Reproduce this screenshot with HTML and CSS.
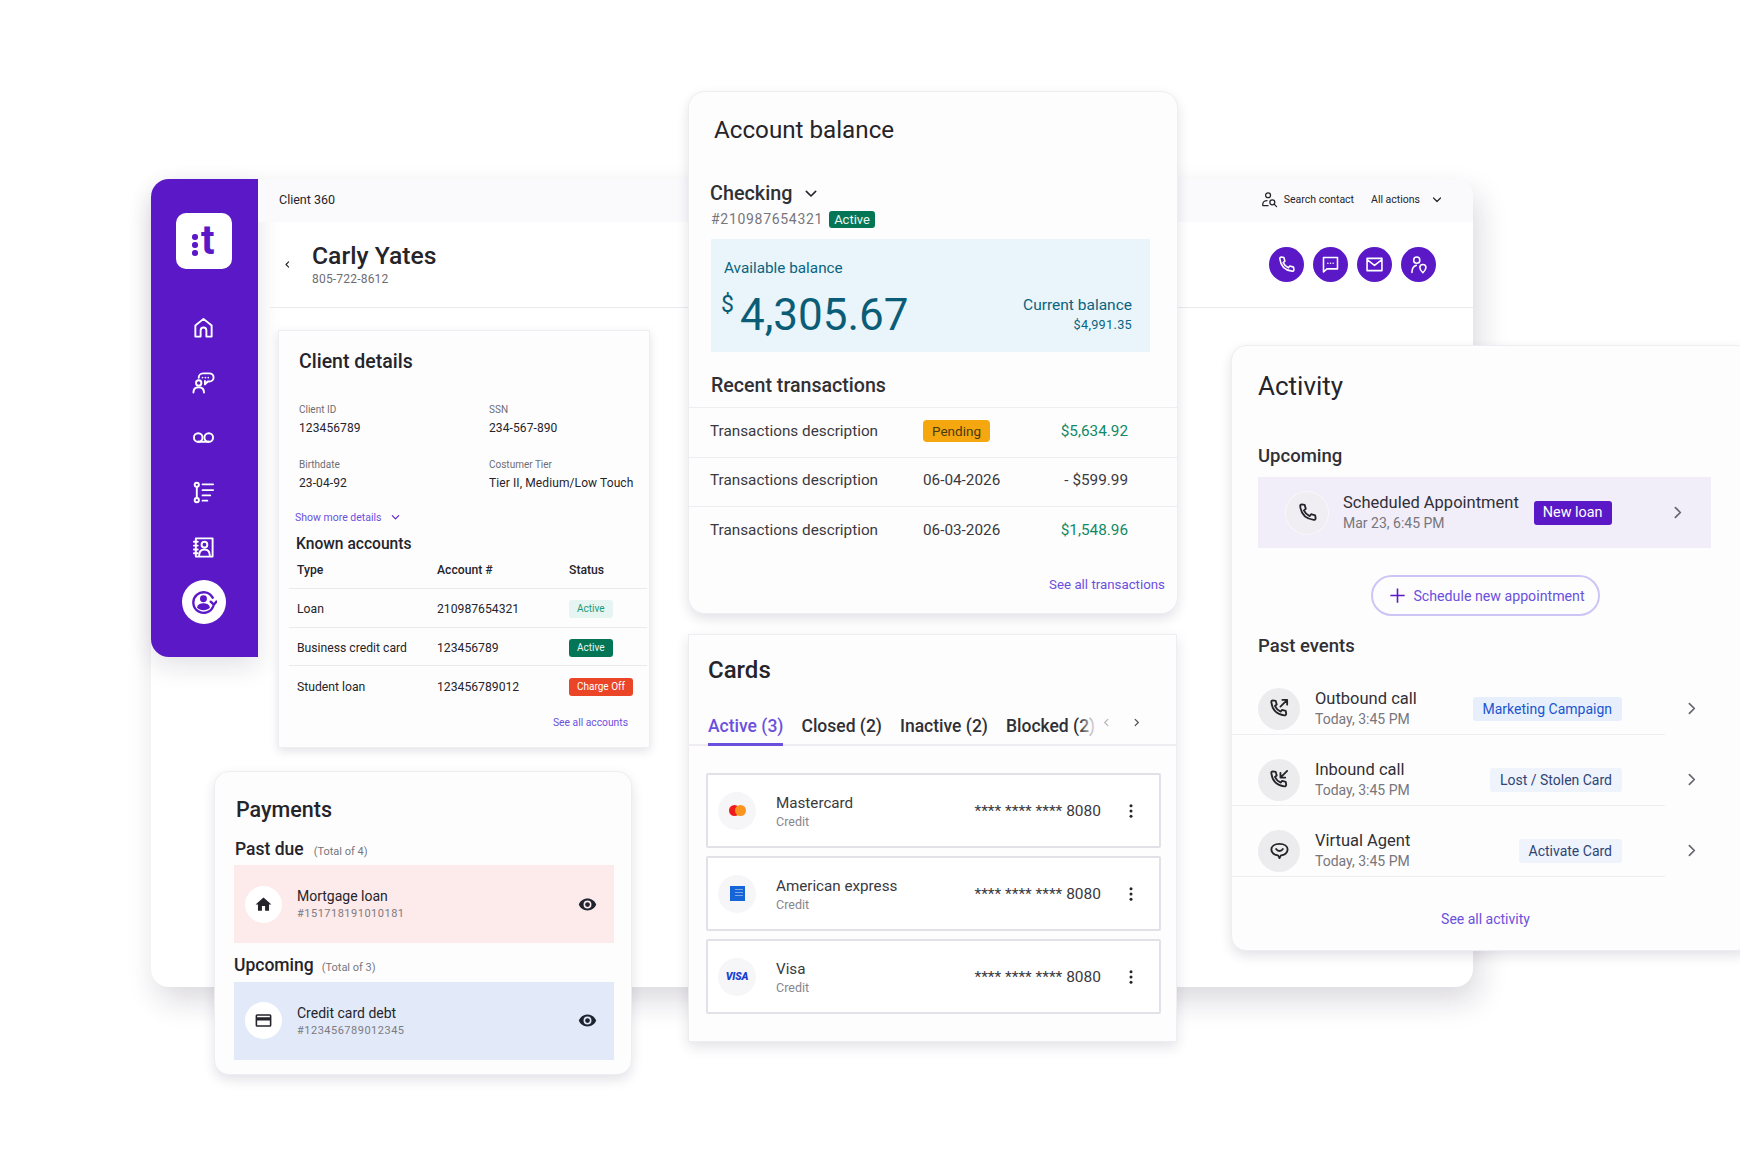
FILE: index.html
```html
<!DOCTYPE html>
<html lang="en">
<head>
    <meta charset="UTF-8">
    <meta name="viewport" content="width=device-width, initial-scale=1.0">
    <title>Client 360</title>
    <link rel="stylesheet" href="styles.css">
</head>
<body>

<!-- Shared icons -->
<svg class="icon-defs" xmlns="http://www.w3.org/2000/svg">
    <symbol id="i-phone" viewBox="0 0 24 24"><path d="M6 3.500 9 4l1.200 4.200-2 1.600a12 12 0 0 0 6 6l1.600-2 4.200 1.200.5 3c0 1-.9 1.800-2 1.600C10.500 18.700 5.300 13.500 4.400 5.500 4.200 4.400 5 3.500 6 3.500z"/></symbol>
    <symbol id="i-out" viewBox="0 0 24 24"><path d="M5 3.500 8 4l1.100 3.800-1.900 1.500a12 12 0 0 0 6 6l1.500-1.900 3.800 1.100.5 3c0 1-.9 1.800-2 1.600C9 18 4.500 13.500 3.500 5.500 3.300 4.400 4 3.500 5 3.500z"/><path d="M13 10l7-7M15 3h5v5"/></symbol>
    <symbol id="i-in" viewBox="0 0 24 24"><path d="M5 3.500 8 4l1.100 3.800-1.900 1.500a12 12 0 0 0 6 6l1.500-1.900 3.800 1.100.5 3c0 1-.9 1.800-2 1.600C9 18 4.500 13.500 3.500 5.500 3.300 4.400 4 3.500 5 3.500z"/><path d="M20 3l-7 7M13 5v5h5"/></symbol>
    <symbol id="i-right" viewBox="0 0 24 24"><path d="M9 5l7 7-7 7"/></symbol>
    <symbol id="i-left" viewBox="0 0 24 24"><path d="M15 5l-7 7 7 7"/></symbol>
    <symbol id="i-down" viewBox="0 0 24 24"><path d="M5 8l7 7 7-7"/></symbol>
    <symbol id="i-eye" viewBox="0 0 24 24"><path fill-rule="evenodd" d="M12 4.500C7 4.500 2.700 7.600 1 12c1.700 4.400 6 7.500 11 7.500s9.300-3.100 11-7.500c-1.700-4.400-6-7.500-11-7.500zM12 17a5 5 0 1 1 0-10 5 5 0 0 1 0 10z"/><circle cx="12" cy="12" r="3"/></symbol>
    <symbol id="i-more" viewBox="0 0 24 24"><circle cx="12" cy="5" r="2"/><circle cx="12" cy="12" r="2"/><circle cx="12" cy="19" r="2"/></symbol>
</svg>

<div class="stage">

    <!-- Client 360 window -->
    <section class="window">
        <aside class="rail">
            <div class="logo">
                <span class="logo-dots"><i></i><i></i><i></i></span>
                <span class="logo-t">t</span>
            </div>
            <nav class="rail-nav">
                <svg class="rail-icon" viewBox="0 0 24 24"><path d="M3.500 21.500V10L12 3l8.500 7v11.500H15V15a3 3 0 0 0-6 0v6.500z"/></svg>
                <svg class="rail-icon" viewBox="0 0 24 24"><circle cx="7" cy="12.500" r="2.800"/><path d="M1.500 22.500c0-3.500 2-5.500 5.500-5.500s5.500 2 5.500 5.500M7 7c0-2.500 2-4.500 4.500-4.500H18c2.500 0 4.500 1.800 4.500 4.200S20.500 11 18 11h-1.500l-3 3v-3.500"/><path class="dots" d="M11 6.800h.01M14 6.800h.01M17 6.800h.01"/></svg>
                <svg class="rail-icon" viewBox="0 0 24 24"><circle cx="6.500" cy="12" r="4.500"/><circle cx="17.500" cy="12" r="4.500"/><path d="M6.500 16.500h11"/></svg>
                <svg class="rail-icon" viewBox="0 0 24 24"><circle cx="5" cy="4" r="2.200"/><circle cx="5" cy="20" r="2.200"/><path d="M5 6v12M11 3.500h11M11 9.500h11M11 15h8M11 20.500h5"/></svg>
                <svg class="rail-icon" viewBox="0 0 24 24"><path d="M4 2.500h17.500v19H4zM2 6h4M2 10h4M2 14h4M2 18h4"/><circle cx="13" cy="9" r="3"/><path d="M7.500 20c0-4 2-6 5.500-6s5.500 2 5.500 6"/></svg>
                <div class="rail-active">
                    <svg viewBox="0 0 24 24"><path class="ring" d="M20 8A9.500 9.500 0 1 0 20.500 16"/><circle cx="11.500" cy="9" r="3.200" class="solid"/><path class="solid" d="M5.500 17c.5-2.500 3-3.800 6-3.800s5.500 1.300 6 3.800c-1.500 1.600-3.600 2.500-6 2.500s-4.500-.9-6-2.500z"/><path class="ring" d="M23.500 11.500l-2.500 3-2.800-2.800"/></svg>
                </div>
            </nav>
        </aside>

        <div class="window-main">
            <header class="topbar">
                <span class="topbar-title">Client 360</span>
                <div class="topbar-actions">
                    <span class="topbar-link">
                        <svg class="icon-sm" viewBox="0 0 24 24"><circle cx="10" cy="6" r="3.500"/><path d="M2.500 20.500v-2c0-3 3-5 6-5M2.500 20.500H10"/><circle cx="16" cy="16" r="3.500"/><path d="M18.500 18.500l3.500 3.500"/></svg>
                        Search contact
                    </span>
                    <span class="topbar-link">All actions</span>
                    <svg class="chev chev-sm"><use href="#i-down"/></svg>
                </div>
            </header>

            <div class="profile">
                <svg class="chev chev-back"><use href="#i-left"/></svg>
                <div class="profile-name">
                    <h1>Carly Yates</h1>
                    <p>805-722-8612</p>
                </div>
                <div class="quick-actions">
                    <span class="quick-btn"><svg viewBox="0 0 24 24"><use href="#i-phone"/></svg></span>
                    <span class="quick-btn"><svg viewBox="0 0 24 24"><path d="M4 4h16v13H8l-4 3.500z"/><path d="M9 10.500h.01M12 10.500h.01M15 10.500h.01"/></svg></span>
                    <span class="quick-btn"><svg viewBox="0 0 24 24"><path d="M3.500 5h17v14h-17zM3.500 6.500L12 13l8.500-6.500"/></svg></span>
                    <span class="quick-btn"><svg viewBox="0 0 24 24"><circle cx="10" cy="7" r="3.500"/><path d="M4.500 21c0-4 1.500-7 5-8"/><path d="M17 21.500s-3.500-3.500-3.500-6a3.500 3.500 0 0 1 7 0c0 2.500-3.500 6-3.500 6z"/></svg></span>
                </div>
            </div>

            <div class="client-card">
                <h2 class="client-title">Client details</h2>
                <dl class="detail-grid">
                    <div><dt>Client ID</dt><dd>123456789</dd></div>
                    <div><dt>SSN</dt><dd>234-567-890</dd></div>
                    <div><dt>Birthdate</dt><dd>23-04-92</dd></div>
                    <div><dt>Costumer Tier</dt><dd>Tier II, Medium/Low Touch</dd></div>
                </dl>
                <div class="show-more">Show more details <svg class="chev chev-purple"><use href="#i-down"/></svg></div>
                <h3 class="known-title">Known accounts</h3>
                <div class="acct-table">
                    <div class="acct-row acct-head"><span>Type</span><span>Account #</span><span>Status</span></div>
                    <div class="acct-row"><span>Loan</span><span>210987654321</span><span><b class="pill pill-soft">Active</b></span></div>
                    <div class="acct-row"><span>Business credit card</span><span>123456789</span><span><b class="pill pill-green">Active</b></span></div>
                    <div class="acct-row"><span>Student loan</span><span>123456789012</span><span><b class="pill pill-red">Charge Off</b></span></div>
                </div>
                <a class="link see-accounts">See all accounts</a>
            </div>
        </div>
    </section>

    <!-- Payments -->
    <section class="card payments">
        <h2>Payments</h2>
        <div class="pay-head pay-head-first"><h3>Past due</h3><small>(Total of 4)</small></div>
        <div class="pay-item pay-red">
            <span class="pay-icon"><svg viewBox="0 0 24 24"><path d="M10 20v-6h4v6h5v-8h3L12 3 2 12h3v8z"/></svg></span>
            <div class="pay-text"><strong>Mortgage loan</strong><em>#151718191010181</em></div>
            <svg class="eye"><use href="#i-eye"/></svg>
        </div>
        <div class="pay-head"><h3>Upcoming</h3><small>(Total of 3)</small></div>
        <div class="pay-item pay-blue">
            <span class="pay-icon"><svg viewBox="0 0 24 24"><path fill-rule="evenodd" d="M20 4H4a2 2 0 0 0-2 2v12a2 2 0 0 0 2 2h16a2 2 0 0 0 2-2V6a2 2 0 0 0-2-2zm0 14H4v-6h16zm0-10H4V6h16z"/></svg></span>
            <div class="pay-text"><strong>Credit card debt</strong><em>#123456789012345</em></div>
            <svg class="eye"><use href="#i-eye"/></svg>
        </div>
    </section>

    <!-- Account balance -->
    <section class="card balance">
        <h2 class="balance-title">Account balance</h2>
        <div class="checking">Checking <svg class="chev chev-md"><use href="#i-down"/></svg></div>
        <div class="acct-no">#210987654321 <b class="pill pill-green pill-lg">Active</b></div>
        <div class="balance-box">
            <div class="avail">Available balance</div>
            <div class="balance-row">
                <div class="amount"><sup>$</sup>4,305.67</div>
                <div class="current"><span>Current balance</span><small>$4,991.35</small></div>
            </div>
        </div>
        <h3 class="recent-title">Recent transactions</h3>
        <div class="tx-list">
            <div class="tx-row"><span>Transactions description</span><span><b class="pill-pending">Pending</b></span><span class="tx-amt tx-plus">$5,634.92</span></div>
            <div class="tx-row"><span>Transactions description</span><span>06-04-2026</span><span class="tx-amt">- $599.99</span></div>
            <div class="tx-row"><span>Transactions description</span><span>06-03-2026</span><span class="tx-amt tx-plus">$1,548.96</span></div>
        </div>
        <a class="link see-tx">See all transactions</a>
    </section>

    <!-- Cards -->
    <section class="card cards">
        <h2 class="cards-title">Cards</h2>
        <div class="tabs">
            <div class="tab-strip">
                <span class="tab tab-on">Active (3)</span>
                <span class="tab">Closed (2)</span>
                <span class="tab">Inactive (2)</span>
                <span class="tab">Blocked (2)</span>
            </div>
            <svg class="chev tab-chev tab-chev-off"><use href="#i-left"/></svg>
            <svg class="chev tab-chev"><use href="#i-right"/></svg>
        </div>
        <div class="card-list">
            <div class="card-row">
                <span class="brand"><i class="mc mc-red"></i><i class="mc mc-orange"></i></span>
                <div class="card-name"><strong>Mastercard</strong><em>Credit</em></div>
                <div class="card-no"><span>**** **** ****</span> 8080</div>
                <svg class="more"><use href="#i-more"/></svg>
            </div>
            <div class="card-row">
                <span class="brand"><i class="amex"></i></span>
                <div class="card-name"><strong>American express</strong><em>Credit</em></div>
                <div class="card-no"><span>**** **** ****</span> 8080</div>
                <svg class="more"><use href="#i-more"/></svg>
            </div>
            <div class="card-row">
                <span class="brand"><span class="visa">VISA</span></span>
                <div class="card-name"><strong>Visa</strong><em>Credit</em></div>
                <div class="card-no"><span>**** **** ****</span> 8080</div>
                <svg class="more"><use href="#i-more"/></svg>
            </div>
        </div>
    </section>

    <!-- Activity -->
    <section class="card activity">
        <h2 class="activity-title">Activity</h2>
        <h3 class="activity-sub">Upcoming</h3>
        <div class="appt">
            <span class="round round-light"><svg viewBox="0 0 24 24"><use href="#i-phone"/></svg></span>
            <div class="event-text"><strong>Scheduled Appointment</strong><em>Mar 23, 6:45 PM</em></div>
            <b class="pill-new">New loan</b>
            <svg class="chev appt-chev"><use href="#i-right"/></svg>
        </div>
        <div class="schedule-wrap">
            <a class="schedule-btn"><svg viewBox="0 0 24 24"><path d="M12 3v18M3 12h18"/></svg>Schedule new appointment</a>
        </div>
        <h3 class="activity-sub past-title">Past events</h3>
        <div class="event">
            <span class="round"><svg viewBox="0 0 24 24"><use href="#i-out"/></svg></span>
            <div class="event-text"><strong>Outbound call</strong><em>Today, 3:45 PM</em></div>
            <span class="tag tag-blue">Marketing Campaign</span>
            <svg class="chev event-chev"><use href="#i-right"/></svg>
        </div>
        <div class="event">
            <span class="round"><svg viewBox="0 0 24 24"><use href="#i-in"/></svg></span>
            <div class="event-text"><strong>Inbound call</strong><em>Today, 3:45 PM</em></div>
            <span class="tag tag-lost">Lost / Stolen Card</span>
            <svg class="chev event-chev"><use href="#i-right"/></svg>
        </div>
        <div class="event">
            <span class="round"><svg viewBox="0 0 24 24"><path d="M12 5c-5 0-8.500 2.500-8.500 6s3.500 6 7 6l1.500 3 1.500-3c3.500 0 7-2.500 7-6s-3.500-6-8.500-6z"/><path d="M8.500 10.500c1 1.500 2 2 3.500 2s2.500-.5 3.500-2"/></svg></span>
            <div class="event-text"><strong>Virtual Agent</strong><em>Today, 3:45 PM</em></div>
            <span class="tag tag-lost">Activate Card</span>
            <svg class="chev event-chev"><use href="#i-right"/></svg>
        </div>
        <a class="link see-activity">See all activity</a>
    </section>

</div>

</body>
</html>
```

FILE: styles.css
```css
* {
    box-sizing: border-box;
}

body {
    margin: 0;
    background-color: #fff;
    font-family: Roboto, "Liberation Sans", sans-serif;
    color: #25242a;
}

h1, h2, h3, p, dl, dd {
    margin: 0;
}

em {
    font-style: normal;
}

.icon-defs {
    display: none;
}

/* The windows sit on a free canvas */
.stage {
    position: relative;
    width: 1740px;
    height: 1160px;
    overflow: hidden;
}

.card {
    position: absolute;
    background-color: #fefdfe;
    border: 1px solid #efedf2;
    box-shadow: 0 5px 12px rgba(40, 30, 70, 0.13);
}

.link {
    color: #6a50dd;
    font-weight: 500;
}

.chev {
    fill: none;
    stroke: #25242a;
    stroke-width: 2.4;
    stroke-linecap: round;
    stroke-linejoin: round;
}

/* Main window */
.window {
    position: absolute;
    left: 151px;
    top: 179px;
    width: 1322px;
    height: 808px;
    display: flex;
    background-color: #fff;
    border-radius: 18px;
    box-shadow: 6px 14px 30px rgba(30, 20, 50, 0.16);
}

.rail {
    flex: 0 0 107px;
    height: 478px;
    padding: 34px 2px 0 0;
    background-color: #5a18c7;
    border-radius: 18px 0 0 18px;
    display: flex;
    flex-direction: column;
    align-items: center;
    box-shadow: 0 10px 24px rgba(30, 20, 50, 0.12);
}

.logo {
    width: 56px;
    height: 56px;
    background-color: #fff;
    border-radius: 10px;
    display: flex;
    justify-content: center;
    align-items: center;
    gap: 3px;
    color: #5a18c7;
}

.logo-dots {
    display: flex;
    flex-direction: column;
    gap: 2.500px;
    margin-top: 8px;
}

.logo-dots i {
    width: 5.500px;
    height: 5.500px;
    border-radius: 50%;
    background-color: #5a18c7;
}

.logo-t {
    font-size: 40px;
    font-weight: 700;
    line-height: 40px;
}

.rail-nav {
    margin-top: 47px;
    display: flex;
    flex-direction: column;
    align-items: center;
    gap: 32px;
}

.rail-icon {
    width: 23px;
    height: 23px;
    fill: none;
    stroke: #fff;
    stroke-width: 2;
    stroke-linejoin: round;
    stroke-linecap: round;
}

.rail-icon .dots {
    stroke-width: 1.800;
}

.rail-active {
    width: 44px;
    height: 44px;
    margin-top: -11px;
    background-color: #fff;
    border-radius: 50%;
    display: flex;
    justify-content: center;
    align-items: center;
}

.rail-active svg {
    width: 26px;
    height: 26px;
}

.rail-active .ring {
    fill: none;
    stroke: #5a18c7;
    stroke-width: 2.200;
    stroke-linecap: round;
    stroke-linejoin: round;
}

.rail-active .solid {
    fill: #5a18c7;
}

.window-main {
    flex: 1;
    min-width: 0;
}

.topbar {
    height: 43px;
    padding: 0 30px 2px 21px;
    background-color: #faf9fc;
    border-radius: 0 18px 0 0;
    display: flex;
    justify-content: space-between;
    align-items: center;
}

.topbar-title {
    font-size: 12.500px;
}

.topbar-actions {
    display: flex;
    align-items: center;
    gap: 17px;
}

.topbar-link {
    display: flex;
    align-items: center;
    gap: 6px;
    font-size: 10.500px;
}

.icon-sm {
    width: 17px;
    height: 17px;
    fill: none;
    stroke: #25242a;
    stroke-width: 1.800;
    stroke-linecap: round;
}

.chev-sm {
    width: 12px;
    height: 12px;
    margin-left: -6px;
}

.profile {
    height: 86px;
    margin-left: 12px;
    padding-right: 37px;
    border-bottom: 1px solid #ebe9ee;
    display: flex;
    align-items: center;
}

.chev-back {
    width: 9px;
    height: 9px;
    margin: 0 20px 0 13px;
    stroke-width: 3;
}

.profile-name {
    flex: 1;
}

.profile-name h1 {
    font-size: 24.700px;
    font-weight: 500;
    line-height: 32px;
    margin-top: -4px;
}

.profile-name p {
    font-size: 12px;
    color: #6e6d73;
    letter-spacing: 0.2px;
}

.quick-actions {
    display: flex;
    gap: 9px;
}

.quick-btn {
    width: 35px;
    height: 35px;
    border-radius: 50%;
    background-color: #5a18c7;
    display: flex;
    justify-content: center;
    align-items: center;
}

.quick-btn svg {
    width: 21px;
    height: 21px;
    fill: none;
    stroke: #fff;
    stroke-width: 1.800;
    stroke-linecap: round;
    stroke-linejoin: round;
}

/* Client details */
.client-card {
    width: 372px;
    height: 418px;
    margin: 22px 0 0 20px;
    padding: 17px 0 0;
    position: relative;
    background-color: #fefdfe;
    border: 1px solid #efedf2;
    box-shadow: 0 3px 9px rgba(40, 30, 70, 0.13);
}

.client-title {
    font-size: 19.500px;
    font-weight: 500;
    margin-left: 20px;
    line-height: 28px;
}

.detail-grid {
    margin: 27px 0 0 20px;
    display: grid;
    grid-template-columns: 190px 1fr;
    row-gap: 22px;
}

.detail-grid dt {
    font-size: 10px;
    color: #6e6d73;
    line-height: 14px;
}

.detail-grid dd {
    margin-top: 3px;
    font-size: 12px;
    letter-spacing: 0.1px;
    line-height: 16px;
}

.show-more {
    margin: 20px 0 0 16px;
    display: flex;
    align-items: center;
    gap: 8px;
    font-size: 10.500px;
    color: #6a50dd;
}

.chev-purple {
    width: 11px;
    height: 11px;
    stroke: #5a18c7;
}

.known-title {
    margin: 10px 0 0 17px;
    font-size: 15.600px;
    font-weight: 500;
    line-height: 20px;
}

.acct-table {
    margin: -2px 2px 0 10px;
}

.acct-row {
    display: grid;
    grid-template-columns: 140px 132px 1fr;
    align-items: center;
    height: 38.500px;
    padding: 3px 0 0 8px;
    font-size: 12.200px;
    border-bottom: 1px solid #ebe9ee;
}

.acct-row:last-child {
    border-bottom: 0;
}

.acct-head {
    height: 37px;
    padding-top: 0;
    font-weight: 500;
}

.pill {
    display: inline-block;
    height: 18px;
    padding: 0 8px;
    border-radius: 3px;
    font-size: 10px;
    font-weight: 400;
    line-height: 18px;
}

.pill-soft {
    background-color: #e6f5f1;
    color: #1c9a75;
}

.pill-green {
    background-color: #047555;
    color: #e9f7f2;
}

.pill-red {
    background-color: #ea4526;
    color: #fff;
}

.see-accounts {
    position: absolute;
    right: 21px;
    bottom: 18px;
    font-size: 10.300px;
    font-weight: 400;
}

/* Payments */
.payments {
    left: 214px;
    top: 771px;
    width: 418px;
    height: 304px;
    padding: 23px 0 0 21px;
    border-radius: 15px;
}

.payments h2 {
    font-size: 21.500px;
    font-weight: 500;
    line-height: 30px;
}

.pay-head {
    display: flex;
    align-items: baseline;
    gap: 8px;
    height: 38.500px;
    margin-left: -2px;
    padding-top: 10px;
}

.pay-head-first {
    margin-left: -1px;
    margin-top: 12px;
    height: 28px;
    padding-top: 0;
    gap: 10px;
}

.pay-head h3 {
    font-size: 17.500px;
    font-weight: 500;
    line-height: 24px;
}

.pay-head small {
    font-size: 11px;
    color: #77767c;
}

.pay-item {
    width: 380px;
    height: 78px;
    margin-left: -2px;
    padding: 0 17px 0 11px;
    display: flex;
    align-items: center;
}

.pay-red {
    background-color: #fdeaea;
}

.pay-blue {
    background-color: #e2eafa;
}

.pay-icon {
    width: 37px;
    height: 37px;
    border-radius: 50%;
    background-color: #fff;
    display: flex;
    justify-content: center;
    align-items: center;
}

.pay-icon svg {
    width: 19px;
    height: 19px;
    fill: #25242a;
}

.pay-text {
    flex: 1;
    margin-left: 15px;
    display: flex;
    flex-direction: column;
    gap: 1px;
}

.pay-text strong {
    font-size: 14px;
    font-weight: 400;
    line-height: 19px;
}

.pay-text em {
    font-size: 11px;
    color: #7d7a80;
    letter-spacing: 0.5px;
    line-height: 14px;
}

.eye {
    width: 19px;
    height: 19px;
    fill: #1f2530;
}

/* Account balance */
.balance {
    left: 688px;
    top: 91px;
    width: 490px;
    height: 523px;
    border-radius: 17px;
}

.balance-title {
    margin: 21px 0 0 25px;
    font-size: 24.200px;
    font-weight: 400;
    line-height: 34px;
}

.checking {
    margin: 34px 0 0 21px;
    display: flex;
    align-items: center;
    gap: 11px;
    font-size: 19.800px;
    font-weight: 500;
    line-height: 26px;
    color: #303035;
}

.chev-md {
    width: 16px;
    height: 16px;
}

.acct-no {
    margin: 1px 0 0 22px;
    display: flex;
    align-items: center;
    gap: 6px;
    font-size: 14px;
    color: #77767c;
    letter-spacing: 0.7px;
    line-height: 22px;
}

.pill-lg {
    height: 17px;
    padding: 0 5px;
    font-size: 13px;
    line-height: 17px;
    letter-spacing: 0;
}

.balance-box {
    width: 439px;
    height: 113px;
    margin: 9px 0 0 22px;
    padding: 20px 18px 0 13px;
    background-color: #e9f5fa;
    color: #0a6480;
}

.avail {
    font-size: 15.300px;
    line-height: 18px;
}

.balance-row {
    display: flex;
    justify-content: space-between;
    margin-top: 8px;
}

.amount {
    font-size: 44px;
    line-height: 60px;
    color: #0b5d77;
}

.amount sup {
    font-size: 23px;
    line-height: 0;
    vertical-align: 18px;
    margin-right: 6px;
    margin-left: -3px;
}

.current {
    display: flex;
    flex-direction: column;
    align-items: flex-end;
    margin-top: 10px;
}

.current span {
    font-size: 15.500px;
    line-height: 20px;
}

.current small {
    font-size: 12.700px;
    letter-spacing: 0.3px;
    line-height: 20px;
}

.recent-title {
    margin: 23px 0 0 22px;
    font-size: 19.600px;
    font-weight: 500;
    line-height: 22px;
    color: #303035;
}

.tx-list {
    margin-top: 10px;
    border-top: 1px solid #efedf2;
}

.tx-row {
    display: grid;
    grid-template-columns: 213px 123px 1fr;
    align-items: center;
    height: 49.500px;
    padding: 0 49px 3px 21px;
    font-size: 15.300px;
    color: #3a393e;
    border-bottom: 1px solid #efedf2;
}

.tx-row:last-child {
    border-bottom: 0;
}

.pill-pending {
    display: inline-block;
    height: 22px;
    padding: 0 9px;
    border-radius: 4px;
    background-color: #f5a70f;
    font-size: 13.500px;
    font-weight: 400;
    line-height: 22px;
    color: #4a3a10;
}

.tx-amt {
    text-align: right;
}

.tx-plus {
    color: #0f8a66;
}

.see-tx {
    position: absolute;
    right: 12px;
    bottom: 21px;
    font-size: 13.300px;
    font-weight: 400;
}

/* Cards */
.cards {
    left: 688px;
    top: 634px;
    width: 489px;
    height: 408px;
}

.cards-title {
    margin: 20px 0 0 19px;
    font-size: 24px;
    font-weight: 500;
    line-height: 30px;
}

.tabs {
    position: relative;
    height: 41px;
    margin-top: 20px;
    padding: 0 0 0 19px;
    border-bottom: 2px solid #efedf2;
    display: flex;
    align-items: flex-start;
}

.tab-strip {
    width: 389px;
    display: flex;
    gap: 18px;
    overflow: hidden;
    white-space: nowrap;
    height: 41px;
}

.tab {
    height: 41px;
    padding: 9px 0 0;
    font-size: 17.500px;
    font-weight: 500;
    line-height: 24px;
    color: #303035;
}

.tab-on {
    color: #6a50dd;
    border-bottom: 3px solid #6a50dd;
}

/* Fade for the tab that runs under the arrows */
.tab-strip::after {
    content: '';
    position: absolute;
    left: 390px;
    top: 0;
    width: 18px;
    height: 39px;
    background: linear-gradient(to right, rgba(254, 253, 254, 0), #fefdfe);
}

.tab-chev {
    width: 11px;
    height: 11px;
    margin: 12px 0 0 4px;
    stroke: #4a4a50;
    stroke-width: 2.500;
}

.tab-chev + .tab-chev {
    margin-left: 19px;
}

.tab-chev-off {
    stroke: #b5b4ba;
}

.card-list {
    margin: 27px 0 0 17px;
    display: flex;
    flex-direction: column;
    gap: 8px;
}

.card-row {
    width: 455px;
    height: 75px;
    padding: 0 19px 0 10px;
    background-color: #fff;
    border: 2px solid #e3e1e7;
    border-radius: 2px;
    display: flex;
    align-items: center;
}

.brand {
    width: 38px;
    height: 38px;
    border-radius: 50%;
    background-color: #f6f5f8;
    display: flex;
    justify-content: center;
    align-items: center;
}

.mc {
    width: 11px;
    height: 11px;
    border-radius: 50%;
}

.mc-red {
    background-color: #f01c1c;
}

.mc-orange {
    background-color: #f9941e;
    margin-left: -5px;
}

.amex {
    width: 15px;
    height: 15px;
    background-color: #1565d8;
    background-image: repeating-linear-gradient(to bottom, rgba(255, 255, 255, 0.45) 0 1px, transparent 1px 3px);
    background-size: 8px 9px;
    background-repeat: no-repeat;
    background-position: 5px 3px;
}

.visa {
    font-size: 10.500px;
    font-weight: 900;
    font-style: italic;
    color: #1a3ed0;
    letter-spacing: -0.2px;
}

.card-name {
    flex: 1;
    margin: 1px 0 0 20px;
    display: flex;
    flex-direction: column;
}

.card-name strong {
    font-size: 15.200px;
    font-weight: 400;
    line-height: 20px;
    color: #3a393e;
}

.card-name em {
    font-size: 12.500px;
    line-height: 17px;
    color: #87868c;
}

.card-no {
    font-size: 15.500px;
    color: #3a393e;
    margin-right: 21px;
}

.card-no span {
    font-size: 15.500px;
}

.more {
    width: 18px;
    height: 18px;
    fill: #25242a;
}

/* Activity */
.activity {
    left: 1231px;
    top: 345px;
    width: 520px;
    height: 606px;
    padding-top: 20px;
    border-radius: 15px;
}

.activity-title {
    margin-left: 26px;
    font-size: 26px;
    font-weight: 400;
    line-height: 40px;
}

.activity-sub {
    margin: 38px 0 0 26px;
    font-size: 18.500px;
    font-weight: 500;
    line-height: 24px;
    color: #303035;
}

.appt {
    width: 453px;
    height: 71px;
    margin: 9px 0 0 26px;
    padding: 0 26px 0 28px;
    background-color: #f1edf9;
    display: flex;
    align-items: center;
}

.round {
    width: 42px;
    height: 42px;
    flex: 0 0 42px;
    border-radius: 50%;
    background-color: #ececee;
    display: flex;
    justify-content: center;
    align-items: center;
}

.round-light {
    background-color: #f0eef2;
    box-shadow: 0 0 0 1px #f8f7fa;
}

.round svg {
    width: 23px;
    height: 23px;
    fill: none;
    stroke: #25242a;
    stroke-width: 1.900;
    stroke-linecap: round;
    stroke-linejoin: round;
}

.event-text {
    margin-left: 15px;
    display: flex;
    flex-direction: column;
}

.event-text strong {
    font-size: 16.500px;
    font-weight: 400;
    line-height: 22px;
    color: #303035;
}

.event-text em {
    font-size: 14px;
    line-height: 19px;
    color: #77767c;
}

.pill-new {
    height: 24px;
    margin-left: 15px;
    padding: 0 9px;
    border-radius: 3px;
    background-color: #5a18c7;
    color: #fff;
    font-size: 14.400px;
    font-weight: 400;
    line-height: 24px;
}

.appt-chev {
    width: 17px;
    height: 17px;
    margin-left: auto;
    margin-right: -1px;
    stroke: #66656b;
}

.schedule-wrap {
    width: 453px;
    margin: 27px 0 0 26px;
    display: flex;
    justify-content: center;
    padding-left: 2px;
}

.schedule-btn {
    height: 41px;
    padding: 0 13px 0 15px;
    border: 2px solid #cdc5f5;
    border-radius: 21px;
    display: flex;
    align-items: center;
    gap: 6px;
    font-size: 14.200px;
    color: #6a50dd;
}

.schedule-btn svg {
    width: 19px;
    height: 19px;
    fill: none;
    stroke: #5a18c7;
    stroke-width: 2;
}

.past-title {
    margin-top: 18px;
    margin-bottom: 6px;
}

.event {
    width: 433px;
    height: 71px;
    padding: 19px 0 0 26px;
    border-bottom: 1px solid #efedf2;
    display: flex;
    align-items: center;
}

.event .event-text {
    flex: 1;
}

.tag {
    height: 24px;
    padding: 0 10px;
    border-radius: 3px;
    font-size: 14px;
    line-height: 24px;
}

.tag-blue {
    background-color: #e8effc;
    color: #1a55cf;
}

.tag-lost {
    background-color: #eef3fc;
    color: #2f4577;
}

.event-chev {
    width: 17px;
    height: 17px;
    margin-left: 61px;
    margin-right: -35px;
    flex: 0 0 17px;
    stroke: #66656b;
}

.see-activity {
    display: block;
    width: 453px;
    margin: 34px 0 0 26px;
    padding-left: 2px;
    text-align: center;
    font-size: 14px;
    font-weight: 400;
}
```
